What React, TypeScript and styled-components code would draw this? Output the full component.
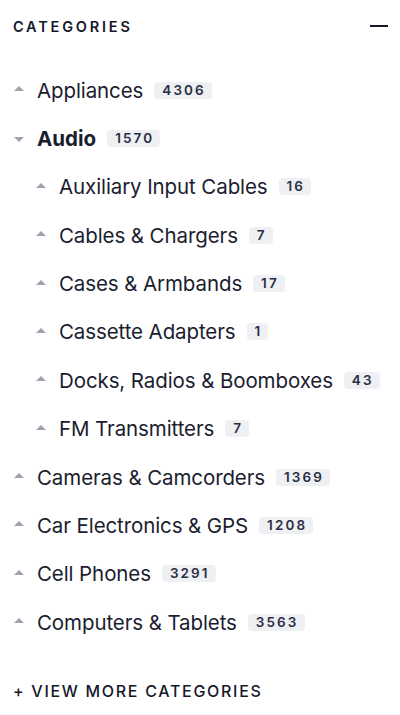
import React from "react";
import styled, { createGlobalStyle } from "styled-components";

const Global = createGlobalStyle`
  html, body { margin: 0; padding: 0; background: #ffffff; }
  body { font-family: Inter, "Noto Sans", sans-serif; color: #1b1d2f; -webkit-font-smoothing: antialiased; }
`;

const Panel = styled.section`
  width: 400px;
  display: flex;
  flex-direction: column;
`;

const Header = styled.header`
  display: flex;
  align-items: center;
  justify-content: space-between;
  height: 52px;
  padding: 0 12px 0 13px;
  box-sizing: border-box;
`;

const Title = styled.h2`
  margin: 0;
  font-size: 14.5px;
  font-weight: 600;
  letter-spacing: 2.8px;
  color: #15172a;
`;

const Collapse = styled.span`
  width: 18px;
  height: 2px;
  background: #15172a;
  display: block;
`;

const List = styled.ul`
  list-style: none;
  margin: 14px 0 0 0;
  padding: 0;
`;

const Row = styled.li<{ $depth: number }>`
  height: 48.36px;
  display: flex;
  align-items: center;
  padding-left: ${(p) => 14 + p.$depth * 22}px;
  box-sizing: border-box;
`;

const Caret = styled.span<{ $open: boolean }>`
  width: 0;
  height: 0;
  border-left: 5px solid transparent;
  border-right: 5px solid transparent;
  ${(p) => (p.$open ? "border-top: 5px solid #9ea2ac;" : "border-bottom: 5px solid #9ea2ac;")}
  margin-right: 13px;
  margin-top: ${(p) => (p.$open ? "2px" : "-3px")};
`;

const Label = styled.span<{ $bold: boolean }>`
  font-size: 20.5px;
  font-weight: ${(p) => (p.$bold ? 700 : 400)};
  color: #1b1d2f;
  letter-spacing: ${(p) => (p.$bold ? "0" : "-0.1px")};
`;

const Badge = styled.span`
  margin-left: 11px;
  background: #eef0f3;
  border-radius: 4px;
  padding: 0 6px 0 8px;
  font-size: 13.5px;
  font-weight: 600;
  letter-spacing: 2.1px;
  line-height: 17px;
  color: #2a2e45;
`;

const More = styled.button`
  margin: 35px 0 0 13px;
  padding: 0;
  background: none;
  border: none;
  text-align: left;
  font-family: Inter, "Noto Sans", sans-serif;
  font-size: 16px;
  font-weight: 500;
  letter-spacing: 1.7px;
  color: #15172a;
  cursor: pointer;
`;

type Item = { name: string; count: number; depth: number; open?: boolean; bold?: boolean };

const items: Item[] = [
  { name: "Appliances", count: 4306, depth: 0 },
  { name: "Audio", count: 1570, depth: 0, open: true, bold: true },
  { name: "Auxiliary Input Cables", count: 16, depth: 1 },
  { name: "Cables & Chargers", count: 7, depth: 1 },
  { name: "Cases & Armbands", count: 17, depth: 1 },
  { name: "Cassette Adapters", count: 1, depth: 1 },
  { name: "Docks, Radios & Boomboxes", count: 43, depth: 1 },
  { name: "FM Transmitters", count: 7, depth: 1 },
  { name: "Cameras & Camcorders", count: 1369, depth: 0 },
  { name: "Car Electronics & GPS", count: 1208, depth: 0 },
  { name: "Cell Phones", count: 3291, depth: 0 },
  { name: "Computers & Tablets", count: 3563, depth: 0 },
];

export default function App() {
  return (
    <Panel>
      <Global />
      <Header>
        <Title>CATEGORIES</Title>
        <Collapse />
      </Header>
      <List>
        {items.map((it) => (
          <Row key={it.name} $depth={it.depth}>
            <Caret $open={!!it.open} />
            <Label $bold={!!it.bold}>{it.name}</Label>
            <Badge>{it.count}</Badge>
          </Row>
        ))}
      </List>
      <More>+ VIEW MORE CATEGORIES</More>
    </Panel>
  );
}
